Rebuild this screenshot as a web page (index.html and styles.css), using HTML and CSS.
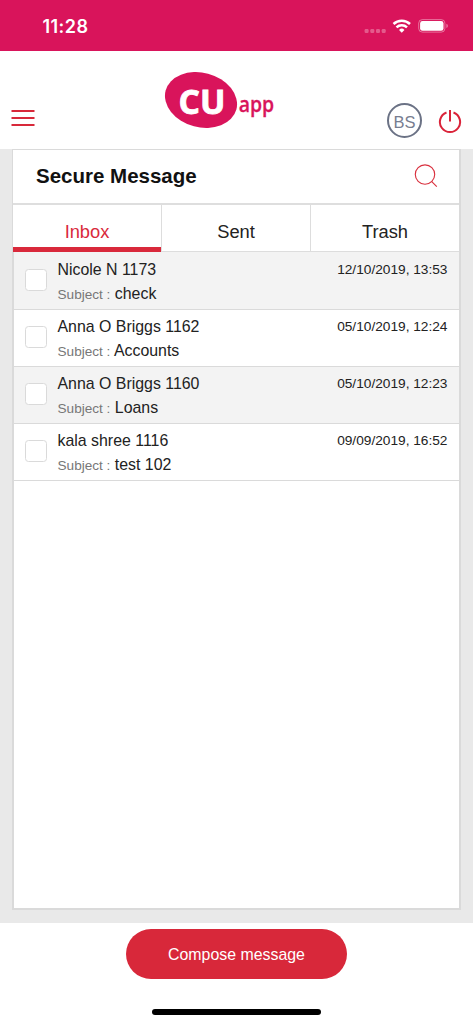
FILE: index.html
```html
<!DOCTYPE html>
<html lang="en">
<head>
<meta charset="utf-8">
<title>Secure Message</title>
<link rel="stylesheet" href="styles.css">
</head>
<body>
<div class="app">
  <div class="status">
    <span class="time">11:28</span>
    <svg class="status-icons" width="110" height="50" viewBox="0 0 110 50">
      <g fill="#fff" fill-opacity=".3"><rect x="1.6" y="29" width="4" height="4" rx="1.2"/><rect x="7.3" y="29" width="4" height="4" rx="1.2"/><rect x="13" y="29" width="4" height="4" rx="1.2"/><rect x="18.7" y="29" width="4" height="4" rx="1.2"/></g>
      <g fill="none" stroke="#fff" stroke-width="2.5"><path d="M30.5 24a12 12 0 0 1 16.5 0"/><path d="M33.5 27.4a7.6 7.6 0 0 1 10.5 0"/></g>
      <path d="M38.750 32.7l-2.7-2.8a3.9 3.9 0 0 1 5.4 0z" fill="#fff"/>
      <rect x="55.7" y="19.6" width="26.2" height="12.5" rx="3.6" fill="none" stroke="#fff" stroke-opacity=".4"/>
      <rect x="57.1" y="21" width="23.4" height="9.8" rx="2.4" fill="#fff"/>
      <path d="M83.3 23.7q1.7.6 1.7 2.2t-1.7 2.2z" fill="#fff" fill-opacity=".4"/>
    </svg>
  </div>
  <header class="header">
    <svg class="menu" width="24" height="20" viewBox="0 0 24 20"><path d="M.5 3h23M.5 10h23M.5 17h23" stroke="#d8293a" stroke-width="2"/></svg>
    <svg class="logo" width="120" height="64" viewBox="0 0 120 64">
      <ellipse cx="41" cy="30" rx="36.6" ry="27.2" transform="rotate(15 41 30)" fill="#d9145b"/>
      <text class="logo-cu" x="18.5" y="44.2" textLength="47" lengthAdjust="spacingAndGlyphs">CU</text>
      <text class="logo-app" x="78.7" y="42" textLength="35.5" lengthAdjust="spacingAndGlyphs">app</text>
    </svg>
    <div class="account">
      <span class="avatar">BS</span>
      <svg width="24" height="26" viewBox="0 0 24 26" fill="none" stroke="#da2339"><path d="M8.5 3.5A10.1 10.1 0 1 0 15.5 3.5" stroke-width="2"/><path d="M12 1v11.5" stroke-width="2"/></svg>
    </div>
  </header>
  <main class="main">
    <section class="panel">
      <div class="panel-head">
        <h1>Secure Message</h1>
        <svg width="24" height="26" viewBox="0 0 24 26" fill="none" stroke="#d9303e" stroke-width="1.15"><circle cx="11" cy="11.5" r="9.7"/><path d="M17.8 18.6l5 5.1"/></svg>
      </div>
      <nav class="tabs"><a class="tab active">Inbox</a><a class="tab">Sent</a><a class="tab">Trash</a></nav>
      <ul class="messages">
        <li class="message"><span class="check"></span><div class="body"><div class="name">Nicole N 1173</div><div class="subject"><span>Subject :</span> check</div></div><time>12/10/2019, 13:53</time></li>
        <li class="message"><span class="check"></span><div class="body"><div class="name">Anna O Briggs 1162</div><div class="subject"><span>Subject :</span> Accounts</div></div><time>05/10/2019, 12:24</time></li>
        <li class="message"><span class="check"></span><div class="body"><div class="name">Anna O Briggs 1160</div><div class="subject"><span>Subject :</span> Loans</div></div><time>05/10/2019, 12:23</time></li>
        <li class="message"><span class="check"></span><div class="body"><div class="name">kala shree 1116</div><div class="subject"><span>Subject :</span> test 102</div></div><time>09/09/2019, 16:52</time></li>
      </ul>
    </section>
  </main>
  <footer class="footer">
    <button class="compose">Compose message</button>
    <div class="home-bar"></div>
  </footer>
</div>
</body>
</html>
```

FILE: styles.css
```css
* { box-sizing: border-box; }
body { margin: 0; background: #fff; color: #222; font-family: "Liberation Sans", Arial, sans-serif; }
.app { width: 473px; height: 1024px; display: flex; flex-direction: column; overflow: hidden; }
.status { height: 50.5px; flex: none; display: flex; justify-content: space-between; background: #d9145b; }
.time { padding: 15px 0 0 42.5px; font: 600 18px/24px Inter, sans-serif; letter-spacing: .45px; color: #fff; }
.header { height: 98.5px; flex: none; display: flex; align-items: flex-start; padding: 0 11px; }
.menu { margin-top: 57.5px; }
.logo { margin: 19.5px auto 0 125px; }
.logo-cu { font: 700 34.5px "Open Sans", sans-serif; fill: #fff; stroke: #fff; stroke-width: .8px; }
.logo-app { font: 600 22px "Open Sans", sans-serif; fill: #d9145b; stroke: #d9145b; stroke-width: .3px; }
.account { display: flex; gap: 16px; margin-top: 52.5px; }
.account svg { margin-top: 6px; }
.avatar { width: 35px; height: 35px; border: 2px solid #6b7285; border-radius: 50%; color: #777d90; font-size: 16.5px; line-height: 35px; text-align: center; }
.main { height: 774px; flex: none; padding: 0 12px; background: #e9e9e9; }
.panel { height: 761px; background: #fff; border: solid #dadada; border-width: 1px 2px 2px 1px; }
.panel-head { height: 55px; display: flex; justify-content: space-between; align-items: flex-start; padding: 13px 21px 0 23px; border-bottom: 2px solid #dedede; }
h1 { margin: 0; color: #111; font-size: 20.5px; line-height: 26px; }
.tabs { height: 47px; display: grid; grid-template-columns: 148px 149px 149px; }
.tab { height: 47px; font-size: 18.3px; line-height: 53px; text-align: center; border-bottom: 1px solid #ddd; border-left: 1px solid #ddd; }
.tab.active { color: #d9293b; border-bottom: 5px solid #d9293b; border-left: 0; }
.messages { list-style: none; margin: 0; padding: 0; border-left: 1px solid #dadada; height: 656px; }
.message { height: 57px; display: flex; padding: 0 11.5px 0 11px; border-bottom: 1px solid #dadada; }
.message:first-child { height: 58px; padding-top: 1px; }
.message:nth-child(odd) { background: #f3f3f3; }
.check { width: 22px; height: 22px; margin: 16px 10.5px 0 0; border: 1px solid #dadada; border-radius: 3.5px; background: #fff; }
.body { flex: 1; font-size: 15.9px; }
.name { height: 25px; line-height: 18px; padding-top: 8px; }
.subject { line-height: 18px; padding-top: 7px; }
.subject span { font-size: 13.6px; color: #777; }
time { padding-top: 8px; font-size: 13.7px; line-height: 18px; }
.footer { flex: 1; display: flex; flex-direction: column; align-items: center; padding-top: 6px; }
.compose { width: 221px; height: 50px; padding: 1px 0 0 0; border: 0; border-radius: 25px; background: #d8283a; color: #fff; font: 15.9px "Liberation Sans", Arial, sans-serif; }
.home-bar { width: 169px; height: 6px; margin-top: 30px; border-radius: 3px; background: #000; }
```
